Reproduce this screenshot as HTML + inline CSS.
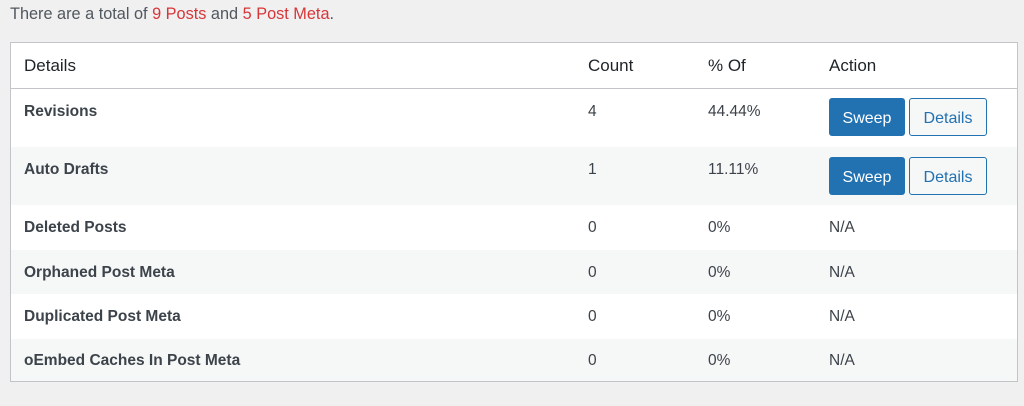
<!DOCTYPE html>
<html><head><style>
*{margin:0;padding:0;box-sizing:border-box}
body{width:1024px;height:406px;background:#f0f0f1;font-family:"Liberation Sans",sans-serif;color:#3c434a;position:relative;overflow:hidden}
.top{position:absolute;left:10px;top:5px;font-size:16.3px;color:#50575e}
.top b{color:#d63638;font-weight:normal}
.tbl{position:absolute;left:10px;top:42px;width:1008px;height:340px;background:#fff;border:1px solid #c3c4c7}
.row{position:absolute;left:0;width:1006px}
.row div{position:absolute;font-size:15.5px}
.h div{font-size:17px;color:#1d2327;top:13px}
.lbl{left:13px;font-weight:bold;color:#3c434a;font-size:15.5px}
.c{left:577px}.p{left:697px}.a{left:818px}
.g{background:#f6f7f7}
.btn{position:absolute;height:38px;border-radius:3px;font-size:16px;text-align:center;line-height:40px}
.sw{background:#2271b1;color:#fff;border:1px solid #2271b1;width:76px}
.dt{background:#f6f7f7;color:#2271b1;border:1px solid #2271b1;width:78px}
</style></head><body>
<div class="top">There are a total of <b>9 Posts</b> and <b>5 Post Meta</b>.</div>
<div class="tbl">
<div class="row h" style="top:0;height:46px;border-bottom:1px solid #c3c4c7"><div style="left:13px">Details</div><div class="c">Count</div><div class="p">% Of</div><div class="a">Action</div></div>
<div class="row" style="top:46px;height:58px"><div class="lbl" style="top:14px">Revisions</div><div class="c" style="top:14px">4</div><div class="p" style="top:14px">44.44%</div><span class="btn sw" style="left:818px;top:9px">Sweep</span><span class="btn dt" style="left:898px;top:9px">Details</span></div>
<div class="row g" style="top:104px;height:58px"><div class="lbl" style="top:14px">Auto Drafts</div><div class="c" style="top:14px">1</div><div class="p" style="top:14px">11.11%</div><span class="btn sw" style="left:818px;top:10px">Sweep</span><span class="btn dt" style="left:898px;top:10px">Details</span></div>
<div class="row" style="top:162px;height:45px"><div class="lbl" style="top:14px">Deleted Posts</div><div class="c" style="top:14px">0</div><div class="p" style="top:14px">0%</div><div class="a" style="top:14px">N/A</div></div>
<div class="row g" style="top:207px;height:44px"><div class="lbl" style="top:14px">Orphaned Post Meta</div><div class="c" style="top:14px">0</div><div class="p" style="top:14px">0%</div><div class="a" style="top:14px">N/A</div></div>
<div class="row" style="top:251px;height:45px"><div class="lbl" style="top:14px">Duplicated Post Meta</div><div class="c" style="top:14px">0</div><div class="p" style="top:14px">0%</div><div class="a" style="top:14px">N/A</div></div>
<div class="row g" style="top:296px;height:42px"><div class="lbl" style="top:13px">oEmbed Caches In Post Meta</div><div class="c" style="top:13px">0</div><div class="p" style="top:13px">0%</div><div class="a" style="top:13px">N/A</div></div>
</div>
</body></html>
